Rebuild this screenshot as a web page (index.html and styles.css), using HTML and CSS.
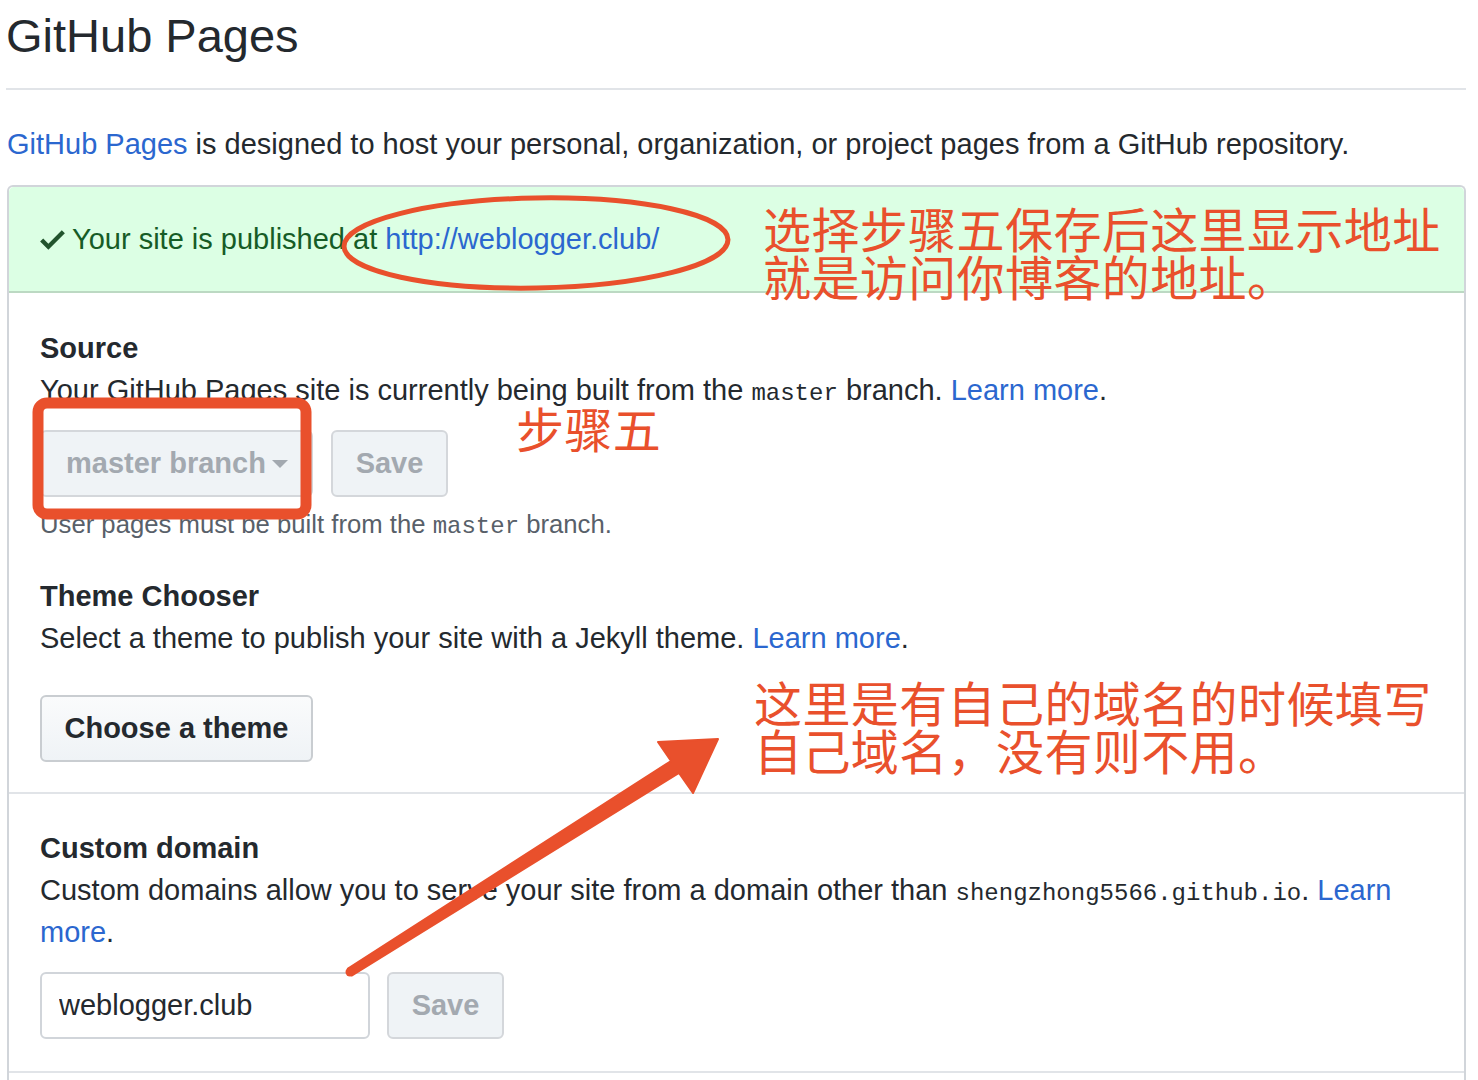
FILE: index.html
```html
<!DOCTYPE html>
<html lang="en">
<head>
<meta charset="utf-8">
<title>GitHub Pages</title>
<link rel="stylesheet" href="styles.css">
</head>
<body>
<div class="page">
  <h2 class="subhead">GitHub Pages</h2>
  <p class="intro"><a href="#">GitHub Pages</a> is designed to host your personal, organization, or project pages from a GitHub repository.</p>

  <div class="box">
    <div class="flash">
      <svg class="check" width="25" height="33" viewBox="0 0 12 16" aria-hidden="true"><path d="M12 5l-8 8-4-4 1.5-1.5L4 10l6.5-6.5L12 5z"/></svg>
      <span>Your site is published at <a href="#">http://weblogger.club/</a></span>
    </div>

    <div class="section section-first">
      <h3 class="heading">Source</h3>
      <p class="desc">Your GitHub Pages site is currently being built from the <code>master</code> branch. <a href="#">Learn more</a>.</p>
      <div class="form-row">
        <button class="btn btn-select" disabled>master branch<span class="caret"></span></button>
        <button class="btn btn-save" disabled>Save</button>
      </div>
      <p class="note">User pages must be built from the <code>master</code> branch.</p>

      <h3 class="heading heading-gap">Theme Chooser</h3>
      <p class="desc">Select a theme to publish your site with a Jekyll theme. <a href="#">Learn more</a>.</p>
      <div class="form-row form-row-wide">
        <button class="btn btn-theme">Choose a theme</button>
      </div>
    </div>

    <div class="section section-sep">
      <h3 class="heading">Custom domain</h3>
      <p class="desc">Custom domains allow you to serve your site from a domain other than <code>shengzhong5566.github.io</code>. <a href="#">Learn more</a>.</p>
      <div class="form-row">
        <input class="domain" type="text" value="weblogger.club">
        <button class="btn btn-save btn-save2" disabled>Save</button>
      </div>
    </div>
    <div class="section-end"></div>
  </div>

  <!-- annotations drawn over the screenshot -->
  <svg class="marks" width="1478" height="1080" viewBox="0 0 1478 1080" aria-hidden="true">
    <ellipse cx="536" cy="243" rx="192" ry="45" fill="none" stroke="#e9502c" stroke-width="5" transform="rotate(-1 536 243)"/>
    <rect x="38" y="403" width="268" height="111" rx="9" fill="none" stroke="#e9502c" stroke-width="11"/>
    <path d="M348 968.6 L671 761 L658 742 L718 739 L693 793 L679 773 L352 975.4 Z" fill="#e9502c" stroke="#e9502c" stroke-width="2" stroke-linejoin="round"/>
    <circle cx="350" cy="972" r="4.5" fill="#e9502c"/>
  </svg>
  <div class="note-cn note-1">选择步骤五保存后这里显示地址<br>就是访问你博客的地址。</div>
  <div class="note-cn note-2">步骤五</div>
  <div class="note-cn note-3">这里是有自己的域名的时候填写<br>自己域名，没有则不用。</div>
</div>
</body>
</html>
```

FILE: styles.css
```css
*, *::before, *::after {
  box-sizing: border-box;
}

html, body {
  margin: 0;
  padding: 0;
  background: #ffffff;
}

body {
  font-family: "Liberation Sans", Arial, sans-serif;
  color: #24292e;
  font-size: 29px;
  line-height: 42px;
}

a {
  color: #2b67cf;
  text-decoration: none;
}

code {
  font-family: "Liberation Mono", "DejaVu Sans Mono", monospace;
  font-size: 24px;
  line-height: 1;
}

.page {
  position: relative;
  width: 1478px;
  height: 1080px;
  padding-left: 6px;
  overflow: hidden;
}

.subhead {
  margin: 0;
  width: 1460px;
  padding-top: 4px;
  padding-bottom: 20px;
  font-size: 47px;
  line-height: 64px;
  font-weight: 400;
  border-bottom: 2px solid #e1e4e8;
}

.intro {
  margin: 33px 0 20px 1px;
}

.box {
  margin-left: 1px;
  width: 1459px;
  border: 2px solid #d1d5da;
  border-bottom: none;
  border-radius: 6px 6px 0 0;
}

.flash {
  display: flex;
  align-items: center;
  gap: 7px;
  height: 106px;
  padding: 0 31px;
  background: #dcffe4;
  border-bottom: 2px solid #bcd9c3;
  border-radius: 5px 5px 0 0;
  color: #165c26;
}

.check {
  fill: #22542d;
  flex: none;
}

.section {
  padding: 34px 31px 32px;
}

.section-first {
  padding-bottom: 30px;
}

.section-sep {
  border-top: 2px solid #e1e4e8;
  padding-top: 33px;
}

.section-end {
  border-top: 2px solid #e1e4e8;
  height: 40px;
}

.heading {
  margin: 0;
  font-size: 29px;
  line-height: 42px;
  font-weight: 700;
}

.heading-gap {
  margin-top: 33px;
}

.desc {
  margin: 0;
}

.form-row {
  display: flex;
  gap: 18px;
  margin-top: 19px;
}

.form-row-wide {
  margin-top: 36px;
}

.btn {
  font-family: "Liberation Sans", Arial, sans-serif;
  font-size: 29px;
  font-weight: 700;
  height: 67px;
  border-radius: 6px;
  border: 2px solid #c9cdd1;
  padding: 0 24px;
  display: inline-flex;
  align-items: center;
  white-space: nowrap;
  flex: none;
}

.btn-select {
  width: 273px;
  background: #eff3f6;
  color: #a3a9b0;
  border-color: #d4d7db;
}

.caret {
  display: inline-block;
  margin-left: 6px;
  width: 0;
  height: 0;
  border-left: 8px solid transparent;
  border-right: 8px solid transparent;
  border-top: 8px solid #a3a9b0;
}

.btn-save {
  width: 117px;
  justify-content: center;
  padding: 0;
  background: #eff3f6;
  color: #a3a9b0;
  border-color: #d4d7db;
}

.btn-theme {
  width: 273px;
  justify-content: center;
  padding: 0;
  background: linear-gradient(#fafbfc, #eff3f6);
  color: #24292e;
}

.note {
  margin: 9px 0 0;
  font-size: 25.7px;
  line-height: 36px;
  color: #586069;
}

.note code {
  font-size: 24px;
}

.domain {
  width: 330px;
  height: 67px;
  border: 2px solid #d1d5da;
  border-radius: 6px;
  padding: 0 17px;
  font-family: "Liberation Sans", Arial, sans-serif;
  font-size: 29px;
  color: #24292e;
  flex: none;
}

.btn-save2 {
  margin-left: -1px;
}

.marks {
  position: absolute;
  left: 0;
  top: 0;
  pointer-events: none;
}

.note-cn {
  position: absolute;
  font-family: "Noto Sans CJK SC", "Noto Sans CJK JP", sans-serif;
  font-size: 48px;
  line-height: 48px;
  letter-spacing: 0.4px;
  color: #e9502c;
  white-space: nowrap;
}

.note-1 {
  left: 763px;
  top: 203px;
}

.note-2 {
  left: 516px;
  top: 403px;
}

.note-3 {
  left: 754px;
  top: 677px;
}
```
